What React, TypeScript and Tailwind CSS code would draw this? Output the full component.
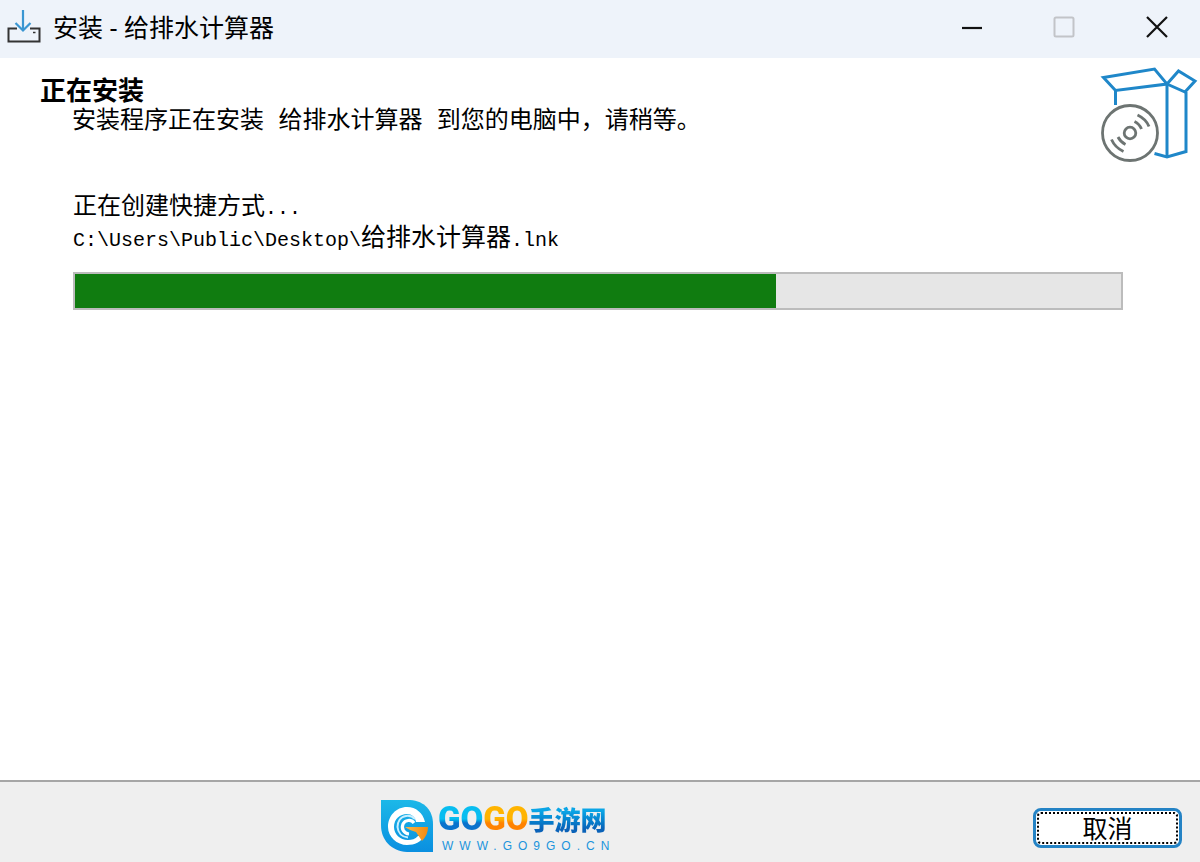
import React, { useState } from 'react';

interface ProgressBarProps {
  value: number;
  label: string;
}

// Window icon: arrow dropping into a tray
const InstallerIcon: React.FC = () => (
  <svg width="34" height="34" viewBox="0 0 34 34" fill="none" aria-hidden="true">
    <path d="M10 18.5H1.5V31.5H32.5V18.5H23" stroke="#333333" strokeWidth="2" />
    <path d="M26 22.5H28.5" stroke="#333333" strokeWidth="1.5" />
    <path d="M16 0V20M8.5 13L16 20.5L23.5 13" stroke="#3a96d2" strokeWidth="2.2" />
  </svg>
);

// Open box with a disc in front of it
const BoxIcon: React.FC = () => (
  <svg width="98" height="98" viewBox="0 0 98 98" fill="none" aria-hidden="true">
    <g stroke="#1f87c9" strokeWidth="3">
      <path d="M3.5 11.5L54.5 3L67 18L15.5 24.5Z" />
      <path d="M67 18L78.5 5L95 15L85 26Z" />
      <path d="M15.5 24V39" />
      <path d="M67 18V91" />
      <path d="M86 26V85.5L67 91L54.5 87.500" />
    </g>
    <g stroke="#6d7472" strokeWidth="2.8">
      <circle cx="30" cy="67" r="27.500" />
      <circle cx="30" cy="67" r="5.800" />
      <path d="M34.500 55.500Q39.500 58 41.500 63M37.500 49Q46 53 49 60.500" />
      <path d="M25.500 78.500Q20.500 76 18 71M23.500 85.500Q15 81.500 11.500 73.500" />
    </g>
  </svg>
);

const LogoMark: React.FC = () => (
  <svg width="54" height="54" viewBox="0 0 54 54" aria-hidden="true">
    <defs>
      <linearGradient id="mark" x1="0" y1="0" x2="0" y2="1">
        <stop offset="0" stopColor="#1cb8e8" />
        <stop offset="1" stopColor="#0a8fe0" />
      </linearGradient>
      <linearGradient id="wedge" x1="0" y1="0" x2="1" y2="0">
        <stop offset="0" stopColor="#f9b84a" />
        <stop offset="1" stopColor="#f58a10" />
      </linearGradient>
    </defs>
    <path d="M1 1H30C45 2 53 12 53 25V53H27C11 52 1 41 1 26Z" fill="url(#mark)" />
    {/* outer C, closed by the orange wedge */}
    <path
      d="M45 23C43 14 36 8 27 8C16 8 8 17 8 28C8 38 17 46 27 46C35 46 41 43 44 37L38 37C35 40 32 41 28 41C20 41 14 35 14 28C14 20 20 15 27 15C32 15 35 18 36 23Z"
      fill="#ffffff"
    />
    <path d="M35 20C32 17 29 16.5 26 17C20 18 17.500 23 17.500 28C18 34 22 38 28 38.500" fill="none" stroke="#c9efff" strokeWidth="2" />
    <path d="M34 24C31 20 25 21 23 25C21 30 24 34.500 29 35" fill="none" stroke="#ffffff" strokeWidth="3.200" />
    <path d="M25 28H48C48 33 46 38 42 42L36 33C32 32 28 30 25 28Z" fill="url(#wedge)" />
  </svg>
);

const SiteLogo: React.FC = () => (
  <a href="#" className="flex items-center gap-1">
    <LogoMark />
    <span className="flex flex-col">
      <span className="flex items-center leading-10 font-black">
        <span className="bg-linear-to-b from-[#08bdf0] from-50% to-[#0a72cc] to-60% bg-clip-text font-['Roboto',sans-serif] text-[33px] text-transparent">
          GO
        </span>
        <span className="bg-linear-to-b from-[#ffb400] from-50% to-[#ff8200] to-60% bg-clip-text font-['Roboto',sans-serif] text-[33px] text-transparent">
          GO
        </span>
        <span className="bg-linear-to-b from-[#0ba5e6] from-30% to-[#0a62b8] to-75% bg-clip-text font-['Noto_Sans_CJK_SC',sans-serif] text-[26px] text-transparent">
          手游网
        </span>
      </span>
      <span className="pl-1 font-['Liberation_Sans',sans-serif] text-xs leading-[14px] tracking-[6px] text-[#1b94dc]">
        WWW.GO9GO.CN
      </span>
    </span>
  </a>
);

const ProgressBar: React.FC<ProgressBarProps> = ({ value, label }) => (
  <div
    role="progressbar"
    aria-label={label}
    aria-valuenow={value}
    aria-valuemin={0}
    aria-valuemax={100}
    className="h-[38px] border-2 border-[#bcbcbc] bg-[#e6e6e6]"
  >
    <div className="h-full bg-[#107c10]" style={{ width: `${value}%` }} />
  </div>
);

const TitleBar: React.FC<{ title: string }> = ({ title }) => (
  <header className="flex h-[58px] items-center bg-[#eef3fa] pb-1 pl-[7px]">
    <InstallerIcon />
    <h1 className="ml-3 flex-1 text-[25px] leading-8">{title}</h1>
    <div className="flex h-full">
      <button aria-label="最小化" className="flex w-[92px] items-center justify-center">
        <svg width="22" height="22" viewBox="0 0 22 22" aria-hidden="true">
          <path d="M1 12H21" stroke="#111111" strokeWidth="2.200" />
        </svg>
      </button>
      <button aria-label="最大化" disabled className="flex w-[92px] items-center justify-center">
        <svg width="22" height="22" viewBox="0 0 22 22" fill="none" aria-hidden="true">
          <rect x="1.500" y="1.500" width="19" height="19" rx="1.500" stroke="#c2c4c8" strokeWidth="2" />
        </svg>
      </button>
      <button aria-label="关闭" className="flex w-[90px] items-center justify-center pl-1">
        <svg width="22" height="22" viewBox="0 0 22 22" aria-hidden="true">
          <path d="M1 1L21 21M21 1L1 21" stroke="#111111" strokeWidth="2.200" />
        </svg>
      </button>
    </div>
  </header>
);

export default function App() {
  const [progress] = useState(67);

  return (
    <div className="flex min-h-screen flex-col bg-white font-['Noto_Sans','Noto_Sans_CJK_SC',sans-serif] text-black">
      <TitleBar title="安装 - 给排水计算器" />

      {/* Page heading */}
      <section className="flex items-start justify-between pt-2 pr-[2px] pl-10">
        <div className="pt-2">
          <h2 className="text-[26px] leading-8 font-bold">正在安装</h2>
          <p className="pl-8 font-['Liberation_Mono','Noto_Sans_CJK_SC',monospace] text-2xl leading-8">
            安装程序正在安装 给排水计算器 到您的电脑中，请稍等。
          </p>
        </div>
        <BoxIcon />
      </section>

      {/* Current step */}
      <main className="flex-1 pt-7 pr-[77px] pl-[73px] font-['Liberation_Mono','Noto_Sans_CJK_SC',monospace] text-xl leading-[30px]">
        <p>
          <span className="text-2xl leading-8">正在创建快捷方式</span>...
        </p>
        <p className="mb-4">
          C:\Users\Public\Desktop\<span className="text-[25px] leading-8">给排水计算器</span>.lnk
        </p>
        <ProgressBar value={progress} label="安装进度" />
      </main>

      <footer className="flex h-[82px] items-center border-t-2 border-[#a6a6a6] bg-[#efefef] pt-2 pr-[18px] pl-[380px]">
        <SiteLogo />
        <button className="mt-1 ml-auto h-10 w-[149px] rounded-lg border-[3px] border-[#2483c5] bg-white p-px">
          <span className="flex h-full items-center justify-center rounded border-2 border-dotted border-black text-[25px] leading-none">
            取消
          </span>
        </button>
      </footer>
    </div>
  );
}
